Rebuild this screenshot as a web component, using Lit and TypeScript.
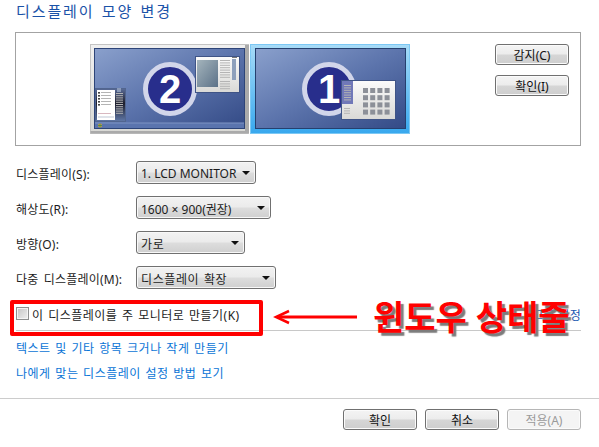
import { LitElement, html, css, svg } from "lit";
import { customElement } from "lit/decorators.js";

// little list lines used on the fake windows
const lines = (x: number, y: number, w: number, n: number, step = 2.4) =>
  Array.from({ length: n }, (_, i) => svg`<rect x=${x} y=${y + i * step} width=${w} height="1" fill="#b4b4b4"/>`);

const monitorDefs = (id: string, frameA: string, frameB: string) => svg`
  <defs>
    <linearGradient id="${id}-screen" x1="0" y1="0" x2="1" y2="1">
      <stop offset="0" stop-color="#8aa0cc"/>
      <stop offset="0.5" stop-color="#5c74ac"/>
      <stop offset="1" stop-color="#334a86"/>
    </linearGradient>
    <linearGradient id="${id}-frame" x1="0" y1="0" x2="0" y2="1">
      <stop offset="0" stop-color=${frameA}/>
      <stop offset="1" stop-color=${frameB}/>
    </linearGradient>
    <linearGradient id="${id}-win" x1="0" y1="0" x2="0" y2="1">
      <stop offset="0" stop-color="#fbfbfb"/>
      <stop offset="1" stop-color="#d9d9d6"/>
    </linearGradient>
    <linearGradient id="${id}-pic" x1="0" y1="0" x2="1" y2="1">
      <stop offset="0" stop-color="#a4b4bc"/>
      <stop offset="1" stop-color="#5c7288"/>
    </linearGradient>
    <linearGradient id="${id}-dark" x1="0" y1="0" x2="0" y2="1">
      <stop offset="0" stop-color="#5a6c98"/>
      <stop offset="0.45" stop-color="#1e1e2c"/>
      <stop offset="1" stop-color="#6078a8"/>
    </linearGradient>
  </defs>`;

const badge = (n: string, cx: number) => svg`
  <circle cx=${cx} cy="45" r="24.5" fill="#282e8c" stroke="#d2d6ea" stroke-width="5"/>
  <text x=${cx} y="59" text-anchor="middle" font-family="Liberation Sans, sans-serif" font-weight="700" font-size="40" fill="#fff">${n}</text>`;

const monitorTwo = html`<svg class="mon" width="160" height="91" viewBox="0 0 160 91">
  ${monitorDefs("m2", "#f0f0f0", "#d8d8d4")}
  <rect x="0.5" y="0.5" width="158" height="89" fill="url(#m2-frame)" stroke="#c4c4c4"/>
  <rect x="155" y="1" width="4" height="88" fill="#aaa"/>
  <rect x="0.5" y="87" width="158" height="2.5" fill="#aaa"/>
  <rect x="4.5" y="4.5" width="150" height="80" fill="url(#m2-screen)" stroke="#2d4478"/>
  <rect x="5" y="79" width="149" height="5" fill="#5a74ae"/>
  <rect x="5" y="78.5" width="149" height="1" fill="#7f94c4"/>
  <circle cx="10" cy="81.5" r="2" fill="#e0a030"/>
  <path d="M8 81.5h4M10 79.5v4" stroke="#3a8a50" stroke-width=".8"/>
  ${badge("2", 80)}
  <g>
    <rect x="105.5" y="12.5" width="44" height="36" fill="url(#m2-win)" stroke="#3f5486"/>
    <rect x="107" y="16" width="21" height="27" fill="url(#m2-pic)"/>
    ${lines(130, 16, 10, 8)}
    ${lines(130, 37, 10, 4)}
    <rect x="142" y="15" width="4" height="21" fill="#8ea0bc"/>
    <rect x="142" y="13" width="5" height="1" fill="#777"/>
  </g>
  <g>
    <rect x="5.5" y="44.5" width="30" height="33" fill="url(#m2-dark)" stroke="#51658f"/>
    <rect x="7" y="46" width="18" height="30" fill="#fff"/>
    <rect x="8" y="48" width="2" height="1.6" fill="#444"/><rect x="8" y="51" width="2" height="1.6" fill="#444"/>
    <rect x="8" y="54" width="2" height="1.6" fill="#444"/><rect x="8" y="57" width="2" height="1.6" fill="#444"/>
    <rect x="8" y="60" width="2" height="1.6" fill="#444"/>
    ${lines(11, 48, 10, 5, 3)}
    <rect x="8" y="69" width="13" height="1" fill="#d8b8c0"/>
    <rect x="8" y="72" width="16" height="2" fill="#dfe3ea"/>
    ${lines(26, 49, 7, 10, 2.2)}
    <rect x="27" y="44" width="4" height="4" fill="#8a9ab8"/>
  </g>
</svg>`;

const monitorOne = html`<svg class="mon" width="160" height="91" viewBox="0 0 160 91">
  ${monitorDefs("m1", "#a8dcf8", "#38a8ee")}
  <rect x="0.5" y="0.5" width="159" height="89" fill="url(#m1-frame)" stroke="#7cc8f4"/>
  <rect x="5.5" y="4.5" width="150" height="80" fill="url(#m1-screen)" stroke="#25406f"/>
  ${badge("1", 79)}
  <rect x="91.5" y="36.5" width="54" height="39" fill="url(#m1-win)" stroke="#3f5486"/>
  <rect x="92" y="37" width="11" height="23" fill="#7078b8"/>
  ${lines(94, 41, 7, 7)}
  ${lines(94, 64, 6, 3)}
  ${[0, 1, 2, 3].map((r) => [0, 1, 2, 3].map((c) =>
    svg`<rect x=${113 + c * 7.2} y=${44 + r * 7.2} width="5" height="5" fill="#8c9098"/>`))}
</svg>`;

@customElement("app-root")
export class AppRoot extends LitElement {
  static styles = css`
    :host {
      display: block;
      position: relative;
      width: 599px;
      height: 447px;
      overflow: hidden;
      background: #fff;
      font-family: "Noto Sans", "Noto Sans CJK KR", sans-serif;
      font-size: 12px;
      color: #1c1c1c;
    }
    .title {
      height: 32px;
      padding-left: 16px;
      font-size: 15px;
      line-height: 22px;
      letter-spacing: 1.9px;
      word-spacing: 1.5px;
      color: #1a52a8;
    }
    .panel {
      display: flex;
      box-sizing: border-box;
      margin: 0 18px 0 15px;
      height: 114px;
      padding: 11px 11px 0 74px;
      border: 1px solid #a3a3a3;
    }
    .canvas {
      display: flex;
      align-items: flex-start;
      width: 320px;
      height: 91px;
    }
    .mon { display: block; flex: none; }
    .side {
      display: flex;
      flex-direction: column;
      gap: 10px;
      margin-left: auto;
    }
    .btn {
      box-sizing: border-box;
      display: flex;
      align-items: center;
      justify-content: center;
      width: 74px;
      height: 21px;
      padding-top: 2px;
      border: 1px solid #707070;
      border-radius: 3px;
      background: linear-gradient(#f4f4f4 0, #ececec 48%, #d6d6d6 52%, #cecece 100%);
      box-shadow: inset 0 0 0 1px #fbfbfb;
      color: #111;
      font-size: 12px;
      line-height: 1;
    }
    .btn.off {
      border-color: #b6b6b6;
      background: #f4f4f4;
      color: #9a9a9a;
    }
    .form {
      display: flex;
      flex-direction: column;
      gap: 12px;
      padding: 15px 0 0 16px;
    }
    .row {
      display: flex;
      align-items: center;
      height: 23px;
    }
    .label {
      width: 120px;
      padding-top: 2px;
      letter-spacing: 0.2px;
      word-spacing: 2px;
    }
    .select {
      box-sizing: border-box;
      display: flex;
      align-items: center;
      justify-content: space-between;
      height: 23px;
      padding: 2px 5px 0 4px;
      border: 1px solid #707070;
      border-radius: 3px;
      background: linear-gradient(#f2f2f2 0, #ebebeb 48%, #dddddd 52%, #cfcfcf 100%);
      box-shadow: inset 0 0 0 1px #f8f8f8;
    }
    .select .kr { letter-spacing: 0.6px; word-spacing: 1px; }
    .caret {
      width: 0;
      height: 0;
      margin-top: -1px;
      border-left: 4px solid transparent;
      border-right: 4px solid transparent;
      border-top: 4px solid #111;
    }
    .primary {
      display: flex;
      align-items: center;
      box-sizing: border-box;
      height: 31px;
      margin: 11px 18px 0 16px;
      padding-bottom: 1px;
      border-bottom: 1px solid #c8c8c8;
    }
    .check {
      box-sizing: border-box;
      width: 13px;
      height: 13px;
      margin: -2px 3px 0 0;
      border: 1px solid #8e8f8f;
      background: linear-gradient(135deg, #c4c4c4, #f0f0f0);
      box-shadow: inset 0 0 0 1px #f4f4f4;
    }
    .primary span { letter-spacing: 0.5px; word-spacing: 1px; }
    .primary a {
      margin-left: auto;
      letter-spacing: 0.3px;
      color: #1a56b0;
    }
    .links {
      display: flex;
      flex-direction: column;
      gap: 7px;
      padding: 9px 0 0 16px;
    }
    .links a {
      height: 18px;
      line-height: 18px;
      letter-spacing: 0.52px;
      word-spacing: 1px;
      color: #0a74d6;
    }
    .footer {
      display: flex;
      justify-content: flex-end;
      gap: 8px;
      box-sizing: border-box;
      position: absolute;
      left: 0;
      right: 0;
      top: 398px;
      padding: 10px 18px 0 0;
      border-top: 1px solid #cccccc;
    }
    /* red annotation painted over the dialog */
    .mark {
      position: absolute;
      left: 10px;
      top: 300px;
      box-sizing: border-box;
      width: 253px;
      height: 36px;
      border: 4px solid #f00;
      border-radius: 2px;
    }
    .arrow {
      position: absolute;
      left: 273px;
      top: 309px;
    }
    .note {
      position: absolute;
      left: 373px;
      top: 295px;
      font-size: 34px;
      font-weight: 700;
      line-height: 44px;
      white-space: nowrap;
      color: #f00;
      text-shadow: 3px 3px 1px #7c7c7c;
    }
  `;

  render() {
    const rows: [string, string, number, string][] = [
      ["디스플레이(S):", "1. LCD MONITOR", 120, ""],
      ["해상도(R):", "1600 × 900(권장)", 135, ""],
      ["방향(O):", "가로", 109, "kr"],
      ["다중 디스플레이(M):", "디스플레이 확장", 140, "kr"],
    ];
    return html`
      <div class="title">디스플레이 모양 변경</div>
      <div class="panel">
        <div class="canvas">${monitorTwo}${monitorOne}</div>
        <div class="side">
          <div class="btn">감지(C)</div>
          <div class="btn">확인(I)</div>
        </div>
      </div>
      <div class="form">
        ${rows.map(([label, value, w, cls]) => html`
          <div class="row">
            <div class="label">${label}</div>
            <div class="select" style="width:${w}px"><span class=${cls}>${value}</span><i class="caret"></i></div>
          </div>`)}
      </div>
      <div class="primary">
        <i class="check"></i>
        <span>이 디스플레이를 주 모니터로 만들기(K)</span>
        <a>고급 설정</a>
      </div>
      <div class="links">
        <a>텍스트 및 기타 항목 크거나 작게 만들기</a>
        <a>나에게 맞는 디스플레이 설정 방법 보기</a>
      </div>
      <div class="footer">
        <div class="btn">확인</div>
        <div class="btn">취소</div>
        <div class="btn off">적용(A)</div>
      </div>
      <div class="mark"></div>
      <svg class="arrow" width="86" height="16" viewBox="0 0 86 16">
        <path d="M84 8H4" stroke="#f00" stroke-width="3"/>
        <path d="M16 2 3 8l13 6" fill="none" stroke="#f00" stroke-width="2.5"/>
      </svg>
      <div class="note">윈도우 상태줄</div>
    `;
  }
}
